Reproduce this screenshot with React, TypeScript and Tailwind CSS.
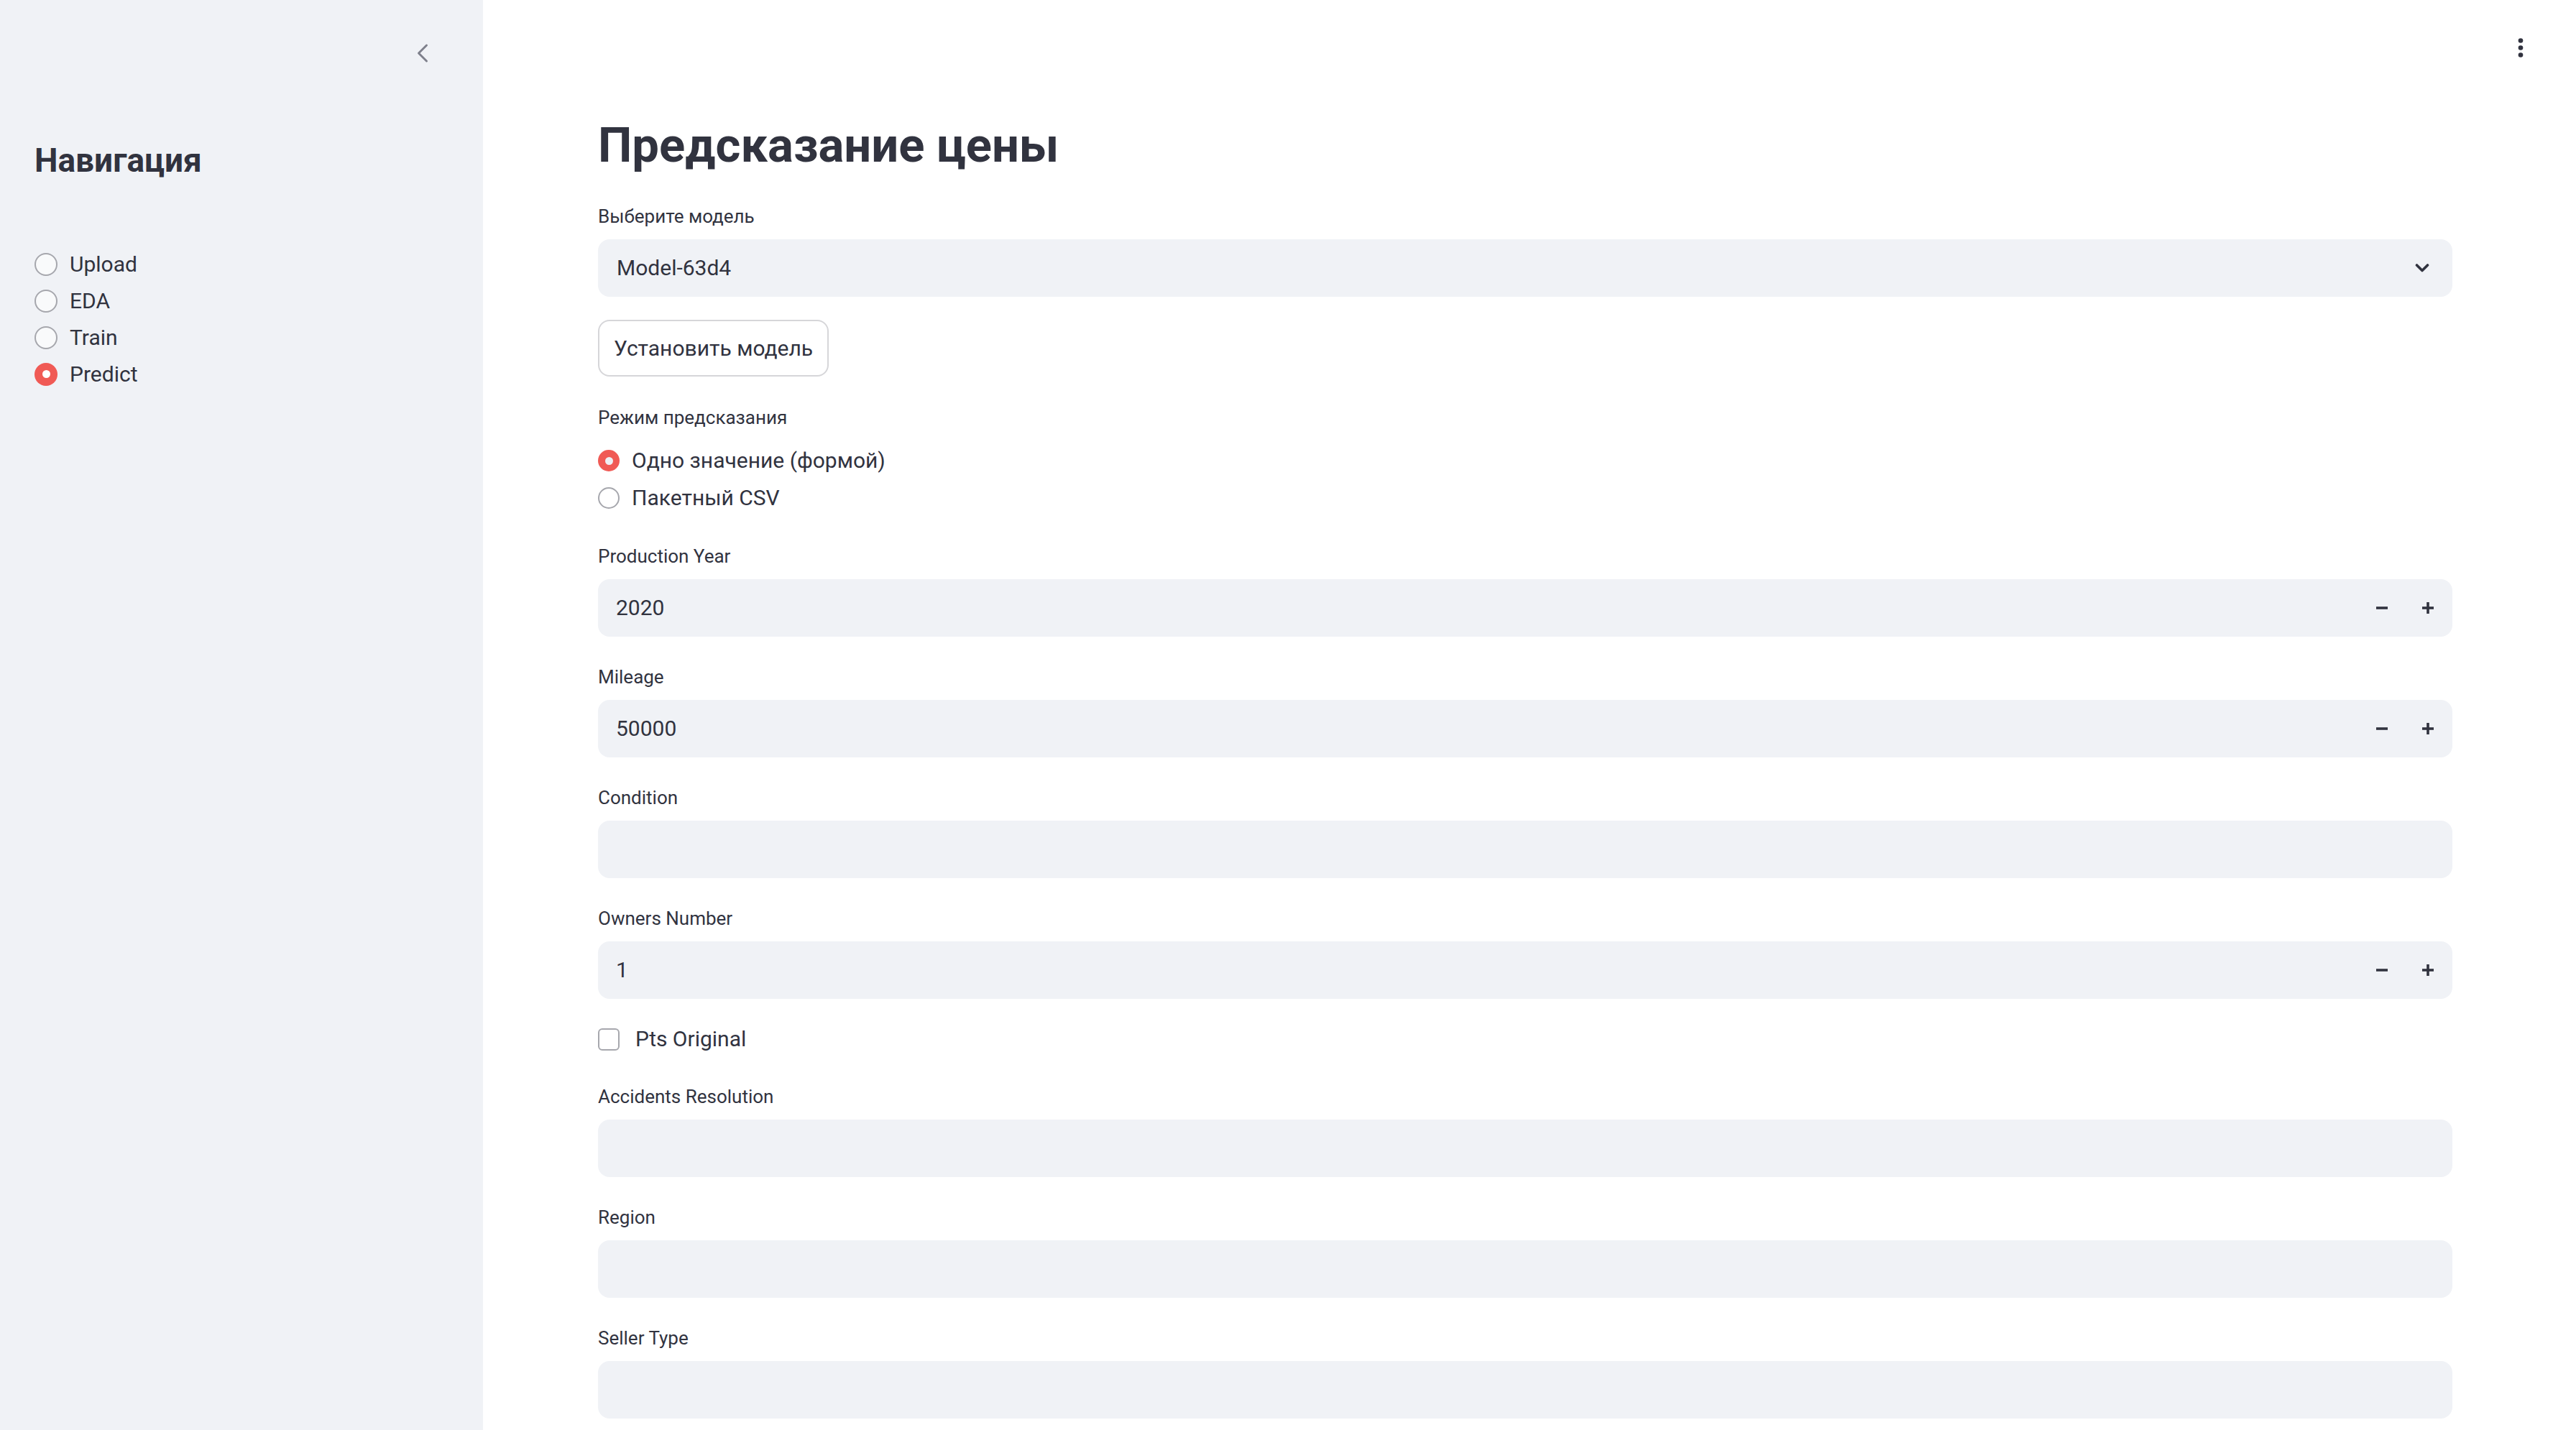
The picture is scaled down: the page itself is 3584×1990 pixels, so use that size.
import { ChevronLeft } from 'lucide-react';

interface Field {
  label: string;
  value?: string;
  stepper?: boolean;
}

const navItems = ['Upload', 'EDA', 'Train', 'Predict'];

const topFields: Field[] = [
  { label: 'Production Year', value: '2020', stepper: true },
  { label: 'Mileage', value: '50000', stepper: true },
  { label: 'Condition' },
  { label: 'Owners Number', value: '1', stepper: true },
];

const bottomFields: Field[] = [
  { label: 'Accidents Resolution' },
  { label: 'Region' },
  { label: 'Seller Type' },
];

function RadioDot({
  checked,
  size,
  inner,
  fill,
}: {
  checked: boolean;
  size: string;
  inner: string;
  fill: string;
}) {
  if (checked) {
    return (
      <span
        className={`flex shrink-0 items-center justify-center rounded-full bg-[#f05a55] ${size}`}
      >
        <span className={`h-[11px] w-[11px] rounded-full ${inner}`} />
      </span>
    );
  }
  return (
    <span
      className={`shrink-0 rounded-full border-2 border-[#a6a7ad] ${fill} ${size}`}
    />
  );
}

function StepIcon({ plus }: { plus?: boolean }) {
  return (
    <svg width="16" height="16" viewBox="0 0 16 16">
      <line x1="0" y1="8" x2="16" y2="8" stroke="#31333f" strokeWidth="3.6" />
      {plus && (
        <line x1="8" y1="0" x2="8" y2="16" stroke="#31333f" strokeWidth="3.6" />
      )}
    </svg>
  );
}

function FieldBlock({ field }: { field: Field }) {
  return (
    <div className="flex flex-col">
      <div className="flex h-[48px] items-center text-[26px] leading-none">
        {field.label}
      </div>
      <div className="mt-[8px] flex h-[80px] items-center rounded-[16px] bg-[#f0f2f6] pl-[25px]">
        <span className="flex-1 text-[30px] leading-none">{field.value}</span>
        {field.stepper && (
          <div className="flex h-full items-center pr-[2px]">
            <div className="flex h-full w-[64px] items-center justify-center">
              <StepIcon />
            </div>
            <div className="flex h-full w-[64px] items-center justify-center">
              <StepIcon plus />
            </div>
          </div>
        )}
      </div>
    </div>
  );
}

export default function App() {
  return (
    <div className="flex h-[1990px] w-full overflow-hidden bg-white font-[Roboto,sans-serif] text-[#31333f]">
      {/* sidebar */}
      <aside className="flex w-[672px] shrink-0 flex-col bg-[#f0f2f6] pl-[48px]">
        <div className="mt-[52px] flex justify-end pr-[62px]">
          <ChevronLeft size={44} strokeWidth={1.6} color="#7f818c" />
        </div>
        <div className="mt-[97px] flex h-[60px] items-center text-[46px] font-bold leading-none">
          Навигация
        </div>
        <div className="mt-[89px] flex flex-col">
          {navItems.map((item) => (
            <div key={item} className="flex h-[51px] items-center gap-[17px]">
              <RadioDot
                checked={item === 'Predict'}
                size="h-[32px] w-[32px]"
                inner="bg-white"
                fill="bg-[#f9fafb]"
              />
              <span className="text-[30px] leading-none">{item}</span>
            </div>
          ))}
        </div>
      </aside>

      {/* main */}
      <main className="relative flex-1 pl-[160px] pr-[172px] pt-[162px]">
        <div className="absolute right-[73px] top-[53px]">
          <svg width="8" height="27" viewBox="0 0 8 27">
            <circle cx="4" cy="3.5" r="3.3" fill="#31333f" />
            <circle cx="4" cy="13.5" r="3.3" fill="#31333f" />
            <circle cx="4" cy="23.5" r="3.3" fill="#31333f" />
          </svg>
        </div>

        <h1 className="flex h-[80px] items-center text-[67px] font-bold leading-none">
          Предсказание цены
        </h1>

        <div className="mt-[35px] flex h-[48px] items-center text-[26px] leading-none">
          Выберите модель
        </div>
        <div className="mt-[8px] flex h-[80px] items-center justify-between rounded-[16px] bg-[#f0f2f6] pl-[26px] pr-[32px]">
          <span className="text-[30px] leading-none">Model-63d4</span>
          <svg width="20" height="12" viewBox="0 0 20 12">
            <polyline
              points="2.5,2 10,9.5 17.5,2"
              fill="none"
              stroke="#31333f"
              strokeWidth="3.6"
              strokeLinecap="round"
              strokeLinejoin="round"
            />
          </svg>
        </div>

        <button className="mt-[32px] flex h-[79px] items-center rounded-[16px] border-2 border-[#d6d6d9] bg-white px-[20px] text-[30px] leading-none">
          Установить модель
        </button>

        <div className="mt-[32px] flex h-[50px] items-center text-[26px] leading-none">
          Режим предсказания
        </div>
        <div className="mt-[9px] flex flex-col">
          {['Одно значение (формой)', 'Пакетный CSV'].map((opt, i) => (
            <div key={opt} className="flex h-[52px] items-center gap-[17px]">
              <RadioDot
                checked={i === 0}
                size="h-[30px] w-[30px]"
                inner="bg-[#eef0f4]"
                fill="bg-white"
              />
              <span className="text-[30px] leading-none">{opt}</span>
            </div>
          ))}
        </div>

        <div className="mt-[31px] flex flex-col gap-[32px]">
          {topFields.map((f) => (
            <FieldBlock key={f.label} field={f} />
          ))}

          <div className="flex h-[48px] items-center gap-[22px]">
            <span className="h-[31px] w-[30px] rounded-[6px] border-2 border-[#a6a7ad] bg-white" />
            <span className="text-[30px] leading-none">Pts Original</span>
          </div>

          {bottomFields.map((f) => (
            <FieldBlock key={f.label} field={f} />
          ))}
        </div>
      </main>
    </div>
  );
}
